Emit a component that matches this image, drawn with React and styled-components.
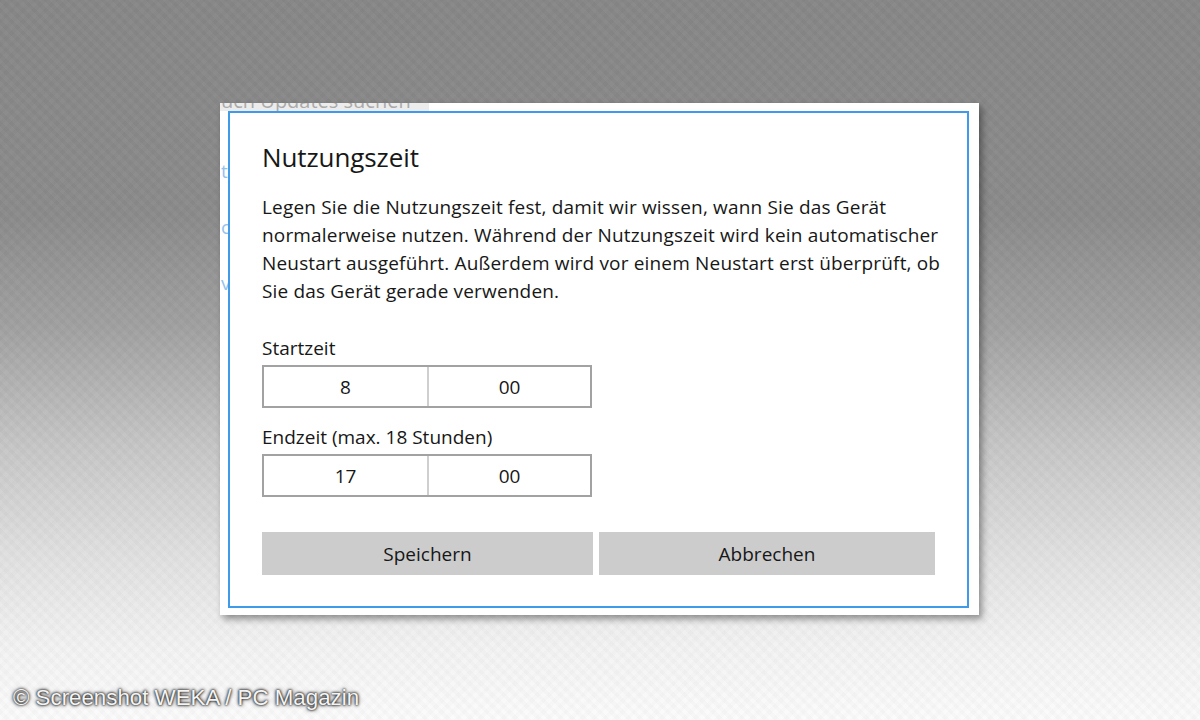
import React from "react";
import styled, { createGlobalStyle } from "styled-components";

const Global = createGlobalStyle`
  html, body { margin: 0; padding: 0; }
  body { width: 1200px; height: 720px; overflow: hidden; }
  #root { width: 1200px; height: 720px; }
`;

const Page = styled.div`
  position: relative;
  width: 1200px;
  height: 720px;
  box-sizing: border-box;
  padding: 103px 0 0 220px;
  background:
    repeating-linear-gradient(45deg, rgba(255,255,255,0.015) 0 4px, rgba(0,0,0,0.015) 4px 8px),
    repeating-linear-gradient(-45deg, rgba(255,255,255,0.012) 0 4px, rgba(0,0,0,0.012) 4px 8px),
    linear-gradient(180deg, #878787 0%, #8b8b8b 30%, #a0a0a0 45%, #c6c6c6 62%, #e2e2e2 78%, #f3f3f3 90%, #fbfbfb 100%);
  font-family: "Open Sans", "Noto Sans", sans-serif;
`;

const Frame = styled.div`
  width: 759px;
  height: 512px;
  box-sizing: border-box;
  background: #ffffff;
  box-shadow: 3px 4px 7px rgba(0, 0, 0, 0.4);
  display: grid;
  grid-template-columns: 8px 741px 10px;
  grid-template-rows: 8px 497px 7px;
`;

const TopStrip = styled.div`
  grid-column: 1 / 4;
  grid-row: 1;
  overflow: hidden;
`;

const StripText = styled.div`
  width: 208px;
  height: 8px;
  background: #ececec;
  overflow: hidden;
  color: #aaaaaa;
  font-size: 20px;
  line-height: 20px;
  white-space: nowrap;
  padding-left: 1px;
  > span { display: block; margin-top: -12px; }
`;

const SideRemnant = styled.div`
  grid-column: 1;
  grid-row: 2 / 4;
  overflow: hidden;
  display: flex;
  flex-direction: column;
  padding-top: 48px;
  gap: 32px;
  color: #94c2ee;
  font-size: 19px;
  line-height: 24px;
  > span { display: block; margin-left: 1px; }
`;

const Dialog = styled.div`
  grid-column: 2;
  grid-row: 2;
  box-sizing: border-box;
  border: 2px solid #3f9be8;
  padding: 28px 30px 30px 32px;
  display: flex;
  flex-direction: column;
  color: #171717;
  min-width: 0;
`;

const Title = styled.h1`
  margin: 0;
  font-weight: 400;
  font-size: 26px;
  line-height: 32px;
  letter-spacing: -0.1px;
`;

const Body = styled.p`
  margin: 20px 0 0;
  font-size: 19px;
  line-height: 28px;
  letter-spacing: 0.17px;
  white-space: nowrap;
`;

const Label = styled.div`
  font-size: 19px;
  line-height: 24px;
  margin-top: ${(p) => p.$top}px;
`;

const TimeBox = styled.div`
  margin-top: 5px;
  width: 330px;
  height: 43px;
  box-sizing: border-box;
  border: 2px solid #a2a2a2;
  display: grid;
  grid-template-columns: 163px 1fr;
`;

const TimeCell = styled.div`
  display: flex;
  align-items: center;
  justify-content: center;
  font-size: 19px;
  border-left: ${(p) => (p.$divider ? "2px solid #cfcfcf" : "none")};
`;

const Buttons = styled.div`
  margin-top: 35px;
  display: grid;
  grid-template-columns: 331px 336px;
  gap: 6px;
`;

const Button = styled.button`
  height: 43px;
  border: none;
  background: #cccccc;
  color: #171717;
  font-family: inherit;
  font-size: 19px;
  padding: 0;
`;

const Watermark = styled.div`
  position: absolute;
  left: 13px;
  top: 684px;
  font-family: "Liberation Sans", Arial, sans-serif;
  font-size: 22.3px;
  line-height: 28px;
  color: #f4f4f4;
  text-shadow: 0 0 2px #222, 0 0 3px #333, 0 0 4px #555;
`;

export default function App() {
  return (
    <>
      <Global />
      <Page>
        <Frame>
          <TopStrip>
            <StripText>
              <span>uch Updates suchen</span>
            </StripText>
          </TopStrip>
          <SideRemnant>
            <span>t</span>
            <span>c</span>
            <span>v</span>
          </SideRemnant>
          <Dialog>
            <Title>Nutzungszeit</Title>
            <Body>
              Legen Sie die Nutzungszeit fest, damit wir wissen, wann Sie das Gerät
              <br />
              normalerweise nutzen. Während der Nutzungszeit wird kein automatischer
              <br />
              Neustart ausgeführt. Außerdem wird vor einem Neustart erst überprüft, ob
              <br />
              Sie das Gerät gerade verwenden.
            </Body>
            <Label $top={31}>Startzeit</Label>
            <TimeBox>
              <TimeCell>8</TimeCell>
              <TimeCell $divider>00</TimeCell>
            </TimeBox>
            <Label $top={17}>Endzeit (max. 18 Stunden)</Label>
            <TimeBox>
              <TimeCell>17</TimeCell>
              <TimeCell $divider>00</TimeCell>
            </TimeBox>
            <Buttons>
              <Button>Speichern</Button>
              <Button>Abbrechen</Button>
            </Buttons>
          </Dialog>
        </Frame>
        <Watermark>© Screenshot WEKA / PC Magazin</Watermark>
      </Page>
    </>
  );
}
